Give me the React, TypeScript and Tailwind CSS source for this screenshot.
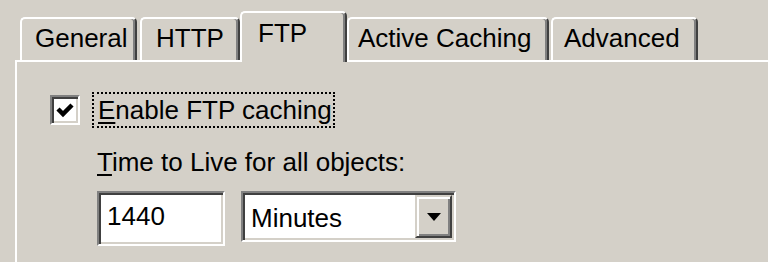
import React from "react";

type Tab = { label: string; box: string; text: string; selected?: boolean };

const tabs: Tab[] = [
  { label: "General", box: "ml-[20px] w-[117px]", text: "pl-[13px]" },
  { label: "HTTP", box: "ml-[3px] w-[100px]", text: "pl-[14px]" },
  { label: "FTP", box: "w-[107px]", text: "pl-[16px]", selected: true },
  { label: "Active Caching", box: "w-[202px]", text: "pl-[9px]" },
  { label: "Advanced", box: "ml-[2px] w-[147px]", text: "pl-[11px]" },
];

function TabButton({ tab }: { tab: Tab }) {
  const base =
    "flex items-start border-l-2 border-t-2 border-r-2 border-l-white border-t-white border-r-[#404040] rounded-tl-[5px] rounded-tr-[5px] shadow-[inset_-2px_0_#808080] bg-[#d4d0c8] whitespace-nowrap";
  if (tab.selected) {
    return (
      <div className={`${base} ${tab.box} relative z-10 h-[51px] -mb-[2px] pt-[5px]`}>
        <span className={tab.text}>{tab.label}</span>
      </div>
    );
  }
  return (
    <div className={`${base} ${tab.box} h-[43px] pt-[4px]`}>
      <span className={tab.text}>{tab.label}</span>
    </div>
  );
}

function Sunken({ className, children }: { className: string; children?: React.ReactNode }) {
  return (
    <div
      className={`border-2 border-t-[#808080] border-l-[#808080] border-b-white border-r-white shadow-[inset_2px_2px_#404040,inset_-2px_-2px_#d4d0c8] bg-white ${className}`}
    >
      {children}
    </div>
  );
}

export default function App() {
  return (
    <div className="w-[768px] h-[262px] overflow-hidden bg-[#d4d0c8] text-black font-['Liberation_Sans',Arial,sans-serif] text-[26px] leading-[30px]">
      <div className="flex items-end h-[60px]">
        {tabs.map((t) => (
          <TabButton key={t.label} tab={t} />
        ))}
      </div>

      <div className="ml-[15px] h-[210px] border-l-2 border-t-2 border-white">
        <div className="flex items-center pl-[33px] pt-[30px]">
          <Sunken className="w-[30px] h-[30px] p-[2px] flex items-center justify-center">
            <svg width="22" height="22" viewBox="0 0 22 22">
              <polyline
                points="4,10 9,15 18,6"
                fill="none"
                stroke="black"
                strokeWidth="4.5"
                strokeLinejoin="miter"
              />
            </svg>
          </Sunken>
          <div className="ml-[12px] h-[36px] pl-[4px] pr-[1px] flex items-center border-2 border-dotted border-black">
            <span>
              <span className="underline underline-offset-[3px] decoration-2">E</span>nable FTP caching
            </span>
          </div>
        </div>

        <div className="pl-[80px] pt-[19px]">
          <div>
            <span className="underline underline-offset-[3px] decoration-2">T</span>ime to Live for all objects:
          </div>
          <div className="flex items-start mt-[14px]">
            <Sunken className="w-[128px] h-[55px] pl-[8px] pt-[8px]">1440</Sunken>
            <Sunken className="ml-[16px] w-[215px] h-[51px] flex items-stretch pl-[8px] pt-[2px] pr-[2px] pb-[2px]">
              <div className="flex-1 flex items-center pt-[2px]">Minutes</div>
              <div className="w-[37px] flex items-center justify-center bg-[#d4d0c8] border-2 border-t-[#d4d0c8] border-l-[#d4d0c8] border-b-[#404040] border-r-[#404040] shadow-[inset_2px_2px_white,inset_-2px_-2px_#808080]">
                <svg width="14" height="8" viewBox="0 0 14 8">
                  <polygon points="0,0 14,0 7,8" fill="black" />
                </svg>
              </div>
            </Sunken>
          </div>
        </div>
      </div>
    </div>
  );
}
